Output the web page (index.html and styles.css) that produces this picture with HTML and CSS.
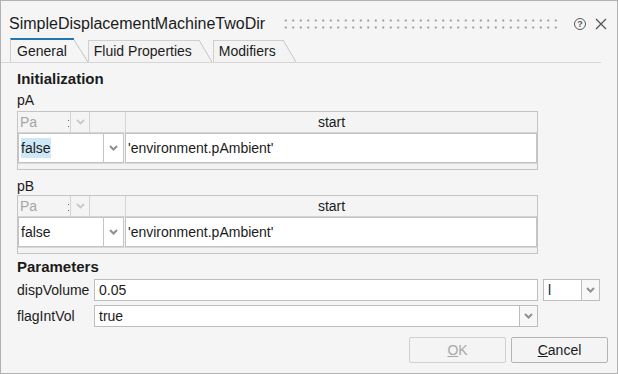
FILE: index.html
```html
<!DOCTYPE html>
<html lang="en">
<head>
    <meta charset="UTF-8">
    <title>SimpleDisplacementMachineTwoDir</title>
    <link rel="stylesheet" href="styles.css">
</head>
<body>
    <div class="dialog">
        <div class="titlebar">
            <span class="title">SimpleDisplacementMachineTwoDir</span>
            <span class="grip"></span>
            <span class="help-icon">?</span>
            <svg class="close-icon" width="12" height="12" viewBox="0 0 12 12">
                <path d="M1 1L11 11M11 1L1 11" stroke="#555" stroke-width="1.3" fill="none"/>
            </svg>
        </div>

        <div class="tabs">
            <div class="tab tab-active">General</div>
            <div class="tab">Fluid Properties</div>
            <div class="tab">Modifiers</div>
        </div>

        <div class="content">
            <div class="section-title">Initialization</div>

            <div class="var-label">pA</div>
            <div class="var-table">
                <div class="vt-head">
                    <div class="vt-unit">Pa<span class="vt-mark"></span></div>
                    <div class="vt-unit-btn">
                        <svg width="9" height="6" viewBox="0 0 9 6"><path d="M1 1L4.5 4.5L8 1" stroke="#c8c8c8" stroke-width="1.8" fill="none"/></svg>
                    </div>
                    <div class="vt-blank"></div>
                    <div class="vt-start">start</div>
                </div>
                <div class="vt-row">
                    <div class="box fixed-box"><span class="sel">false</span></div>
                    <div class="box-btn">
                        <svg width="9" height="6" viewBox="0 0 9 6"><path d="M1 1L4.5 4.5L8 1" stroke="#8f8f8f" stroke-width="2" fill="none"/></svg>
                    </div>
                    <div class="box value-box">'environment.pAmbient'</div>
                </div>
                <div class="vt-foot"></div>
            </div>

            <div class="var-label var-label-next">pB</div>
            <div class="var-table">
                <div class="vt-head">
                    <div class="vt-unit">Pa<span class="vt-mark"></span></div>
                    <div class="vt-unit-btn">
                        <svg width="9" height="6" viewBox="0 0 9 6"><path d="M1 1L4.5 4.5L8 1" stroke="#c8c8c8" stroke-width="1.8" fill="none"/></svg>
                    </div>
                    <div class="vt-blank"></div>
                    <div class="vt-start">start</div>
                </div>
                <div class="vt-row">
                    <div class="box fixed-box">false</div>
                    <div class="box-btn">
                        <svg width="9" height="6" viewBox="0 0 9 6"><path d="M1 1L4.5 4.5L8 1" stroke="#8f8f8f" stroke-width="2" fill="none"/></svg>
                    </div>
                    <div class="box value-box">'environment.pAmbient'</div>
                </div>
                <div class="vt-foot"></div>
            </div>

            <div class="section-title params-title">Parameters</div>

            <div class="param-row">
                <div class="param-label">dispVolume</div>
                <div class="field param-field">0.05</div>
                <div class="combo unit-combo">
                    <div class="field combo-text">l</div>
                    <div class="combo-btn">
                        <svg width="9" height="6" viewBox="0 0 9 6"><path d="M1 1L4.5 4.5L8 1" stroke="#8f8f8f" stroke-width="2" fill="none"/></svg>
                    </div>
                </div>
            </div>
            <div class="param-row">
                <div class="param-label">flagIntVol</div>
                <div class="combo param-field">
                    <div class="field combo-text">true</div>
                    <div class="combo-btn">
                        <svg width="9" height="6" viewBox="0 0 9 6"><path d="M1 1L4.5 4.5L8 1" stroke="#8f8f8f" stroke-width="2" fill="none"/></svg>
                    </div>
                </div>
            </div>

            <div class="buttons">
                <button class="btn btn-disabled"><u>O</u>K</button>
                <button class="btn"><u>C</u>ancel</button>
            </div>
        </div>
    </div>
</body>
</html>
```

FILE: styles.css
```css
body {
    margin: 0;
    font-family: "Liberation Sans", Arial, sans-serif;
    font-size: 14px;
    color: #1b1b1b;
}
.dialog {
    width: 618px;
    height: 374px;
    box-sizing: border-box;
    border: 1px solid #b2b2b2;
    background-color: #f5f5f5;
}

/* title bar */
.titlebar {
    display: flex;
    align-items: center;
    height: 24px;
    padding: 11px 0 0 8px;
}
.title {
    font-size: 16px;
    line-height: 20px;
}
.grip {
    flex: 1;
    height: 14px;
    margin: 0 13px 0 19px;
    background-image: radial-gradient(circle, #9a9a9a 0.9px, transparent 1.3px);
    background-size: 7.5px 7px;
    background-position: -2px 0;
}
.help-icon {
    width: 10px;
    height: 10px;
    border: 1.5px solid #5a5a5a;
    border-radius: 50%;
    font-size: 9px;
    font-weight: bold;
    line-height: 10px;
    text-align: center;
    color: #5a5a5a;
    margin-right: 9px;
}
.close-icon {
    margin-right: 10px;
}

/* tabs */
.tabs {
    display: flex;
    align-items: flex-end;
    height: 24px;
    margin: 2px 16px 0 0;
    padding-left: 9px;
    border-bottom: 1px solid #d6d6d6;
}
.tab {
    position: relative;
    height: 21px;
    line-height: 20px;
    padding: 0 7px 0 5px;
    margin-right: 14px;
    border-top: 1px solid #cfcfcf;
    border-left: 1px solid #cfcfcf;
    background-color: #f3f3f3;
}
.tab::after {
    content: '';
    position: absolute;
    top: -1px;
    bottom: 0;
    right: -13px;
    width: 13px;
    background: linear-gradient(to top right, #f3f3f3 calc(50% - 0.8px), #cfcfcf calc(50% - 0.3px), #cfcfcf calc(50% + 0.3px), transparent calc(50% + 0.8px));
}
.tab-active {
    height: 22px;
    line-height: 22px;
    padding: 0 7px 0 6px;
    border-top: 2px solid #1f78b4;
    background-color: #f5f5f5;
}
.tab-active::after {
    top: 0;
    width: 14px;
    right: -14px;
    background: linear-gradient(to top right, #f5f5f5 calc(50% - 0.8px), #cfcfcf calc(50% - 0.3px), #cfcfcf calc(50% + 0.3px), transparent calc(50% + 0.8px));
}

/* content */
.content {
    padding: 7px 9px 0 16px;
}
.section-title {
    font-size: 15px;
    font-weight: bold;
    line-height: 18px;
}
.params-title {
    margin-top: 4px;
}
.var-label {
    line-height: 17px;
    margin-top: 4px;
}
.var-label-next {
    margin-top: 8px;
}
.var-table {
    width: 521px;
    box-sizing: border-box;
    margin-top: 2px;
    border: 1px solid #c4c4c4;
    background-color: #f3f3f3;
}
.var-label-next + .var-table {
    margin-top: 0;
}
.vt-head {
    display: flex;
    height: 20px;
    line-height: 20px;
    border-bottom: 1px solid #d4d4d4;
    background-color: #f4f4f4;
}
.vt-unit {
    position: relative;
    width: 50px;
    padding-left: 2px;
    color: #a5a5a5;
    border-right: 1px solid #d4d4d4;
}
.vt-mark {
    position: absolute;
    right: 1px;
    top: 8px;
    width: 1px;
    height: 5px;
    border-top: 1px dotted #3a6ea5;
    border-bottom: 1px dotted #3a6ea5;
}
.vt-unit-btn {
    width: 18px;
    display: flex;
    align-items: center;
    justify-content: center;
    border-right: 1px solid #d4d4d4;
}
.vt-blank {
    width: 35px;
    border-right: 1px solid #d4d4d4;
}
.vt-start {
    flex: 1;
    text-align: center;
}
.vt-row {
    display: flex;
    height: 30px;
}
.vt-foot {
    height: 5px;
    border-top: 1px solid #d8d8d8;
}
.box {
    box-sizing: border-box;
    height: 30px;
    line-height: 28px;
    padding-left: 2px;
    border: 1px solid #c4c4c4;
    background-color: white;
}
.fixed-box {
    width: 86px;
}
.sel {
    background-color: #cde8f6;
    padding: 2px 0;
}
.box-btn {
    width: 20px;
    box-sizing: border-box;
    display: flex;
    align-items: center;
    justify-content: center;
    border: 1px solid #c4c4c4;
    border-left: none;
    background-color: white;
}
.value-box {
    flex: 1;
    margin-left: 1px;
}

/* parameters */
.param-row {
    display: flex;
    height: 22px;
    margin-top: 4px;
}
.params-title + .param-row {
    margin-top: 3px;
}
.param-label {
    width: 77px;
    line-height: 22px;
}
.field {
    box-sizing: border-box;
    height: 22px;
    line-height: 20px;
    padding-left: 4px;
    border: 1px solid #bdbdbd;
    background-color: white;
}
.param-field {
    width: 444px;
}
.combo {
    display: flex;
}
.combo-text {
    flex: 1;
}
.combo-btn {
    width: 18px;
    box-sizing: border-box;
    display: flex;
    align-items: center;
    justify-content: center;
    border: 1px solid #bdbdbd;
    border-left: none;
    background-color: #f7f7f7;
}
.unit-combo {
    width: 57px;
    margin-left: 5px;
}

/* buttons */
.buttons {
    display: flex;
    justify-content: flex-end;
    gap: 5px;
    margin-top: 10px;
}
.btn {
    width: 97px;
    height: 26px;
    font-family: "Liberation Sans", Arial, sans-serif;
    font-size: 14px;
    color: #1b1b1b;
    background-color: #f4f4f4;
    border: 1px solid #b4b4b4;
    border-radius: 2px;
}
.btn-disabled {
    color: #a8a8a8;
    border-color: #d0d0d0;
}
```
